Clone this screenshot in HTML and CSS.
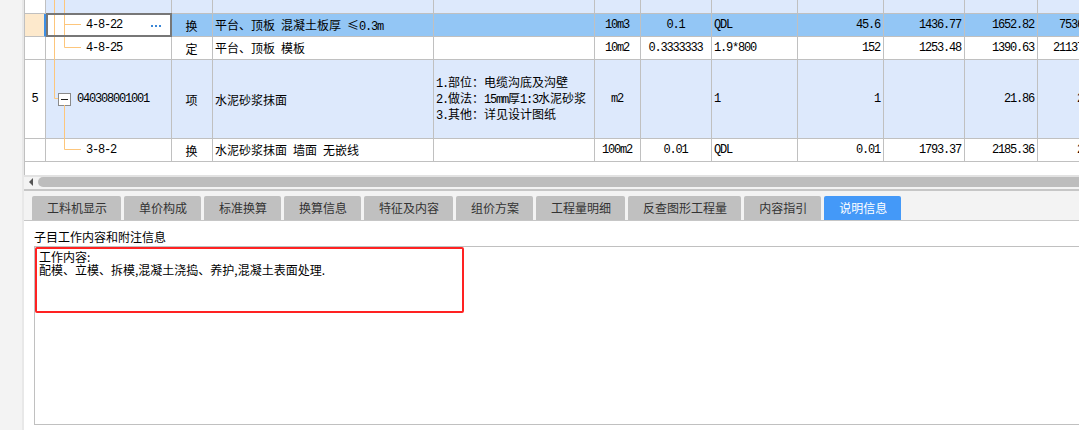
FILE: index.html
```html
<!DOCTYPE html>
<html lang="zh-CN">
<head>
    <meta charset="UTF-8">
    <title>分部分项</title>
    <link rel="stylesheet" href="styles.css">
</head>
<body>
<div class="app">
    <aside class="side"></aside>

    <div class="main">
        <!-- 清单 / 定额 表格 -->
        <div class="sheet">
            <div class="row top hl">
                <div class="c"></div><div class="c"></div><div class="c"></div><div class="c"></div>
                <div class="c"></div><div class="c"></div><div class="c"></div><div class="c"></div>
                <div class="c"></div><div class="c"></div><div class="c"></div><div class="c"></div>
            </div>

            <div class="row sel">
                <div class="c"></div>
                <div class="c code cur lv2"><span class="n">4-8-22</span><span class="more"></span></div>
                <div class="c ctr">换</div>
                <div class="c"><span>平台、顶板<span class="n"> </span>混凝土板厚<span class="n"> </span>≤<span class="n">0.3m</span></span></div>
                <div class="c"></div>
                <div class="c ctr n">10m3</div>
                <div class="c ctr n">0.1</div>
                <div class="c n">QDL</div>
                <div class="c rt n">45.6</div>
                <div class="c rt n">1436.77</div>
                <div class="c rt n">1652.82</div>
                <div class="c rt n">75368.59</div>
            </div>

            <div class="row">
                <div class="c"></div>
                <div class="c code lv2"><span class="n">4-8-25</span></div>
                <div class="c ctr">定</div>
                <div class="c"><span>平台、顶板<span class="n"> </span>模板</span></div>
                <div class="c"></div>
                <div class="c ctr n">10m2</div>
                <div class="c ctr n">0.3333333</div>
                <div class="c n">1.9*800</div>
                <div class="c rt n">152</div>
                <div class="c rt n">1253.48</div>
                <div class="c rt n">1390.63</div>
                <div class="c rt n">211375.76</div>
            </div>

            <div class="row tall hl">
                <div class="c ctr n">5</div>
                <div class="c code lv1"><span class="fold"></span><span class="n">040308001001</span></div>
                <div class="c ctr">项</div>
                <div class="c">水泥砂浆抹面</div>
                <div class="c">
                    <div class="feat">
                        <div><span class="n">1.</span>部位：电缆沟底及沟壁</div>
                        <div><span class="n">2.</span>做法：<span class="n">15mm</span>厚<span class="n">1:3</span>水泥砂浆</div>
                        <div><span class="n">3.</span>其他：详见设计图纸</div>
                    </div>
                </div>
                <div class="c ctr n">m2</div>
                <div class="c"></div>
                <div class="c n">1</div>
                <div class="c rt n">1</div>
                <div class="c"></div>
                <div class="c rt n">21.86</div>
                <div class="c rt n">21.86</div>
            </div>

            <div class="row">
                <div class="c"></div>
                <div class="c code lv2"><span class="n">3-8-2</span></div>
                <div class="c ctr">换</div>
                <div class="c"><span>水泥砂浆抹面<span class="n"> </span>墙面<span class="n"> </span>无嵌线</span></div>
                <div class="c"></div>
                <div class="c ctr n">100m2</div>
                <div class="c ctr n">0.01</div>
                <div class="c n">QDL</div>
                <div class="c rt n">0.01</div>
                <div class="c rt n">1793.37</div>
                <div class="c rt n">2185.36</div>
                <div class="c rt n">21.85</div>
            </div>

            <!-- tree lines -->
            <svg class="tree" width="60" height="160" viewBox="0 0 60 160">
                <g stroke="#fdc67c" stroke-width="1" fill="none">
                    <path d="M29.5 0V98.5H33"/>
                    <path d="M39.5 0V47.5H56M39.5 24.5H56"/>
                    <path d="M39.5 105V149.5H56"/>
                </g>
            </svg>
        </div>

        <div class="hscroll">
            <span class="arrow"></span>
            <span class="thumb"></span>
        </div>

        <div class="tabs">
            <div class="tab">工料机显示</div>
            <div class="tab">单价构成</div>
            <div class="tab">标准换算</div>
            <div class="tab">换算信息</div>
            <div class="tab">特征及内容</div>
            <div class="tab">组价方案</div>
            <div class="tab">工程量明细</div>
            <div class="tab">反查图形工程量</div>
            <div class="tab">内容指引</div>
            <div class="tab on">说明信息</div>
        </div>

        <div class="detail">
            <div class="detail-title">子目工作内容和附注信息</div>
            <div class="memo">
                <p>工作内容:</p>
                <p>配模、立模、拆模,混凝土浇捣、养护,混凝土表面处理.</p>
                <div class="mark"></div>
            </div>
        </div>
    </div>
</div>
</body>
</html>
```

FILE: styles.css
```css
* {
    box-sizing: border-box;
}
body {
    margin: 0;
    background-color: #fff;
    color: #000;
    font: 12px "Noto Sans CJK SC", sans-serif;
    overflow: hidden;
}
.app {
    display: flex;
    height: 430px;
}
.side {
    flex: none;
    width: 24px;
    background-color: #f3f3f3;
    border-right: 2px solid #e8e8e8;
}
.main {
    flex: 1;
    min-width: 0;
    display: flex;
    flex-direction: column;
    overflow: hidden;
}

/* grid */
.sheet {
    position: relative;
    flex: none;
    height: 175px;
    border-left: 1px solid #c0c0c0;
    overflow: hidden;
}
.row {
    display: grid;
    grid-template-columns: 21px 126px 41px 221px 161px 46px 71px 86px 86px 81px 73px 73px;
    height: 23px;
}
.row.top {
    height: 14px;
}
.row.tall {
    height: 79px;
}
.c {
    display: flex;
    align-items: center;
    padding: 0 3px 0 2px;
    border-right: 1px solid #c0c0c0;
    border-bottom: 1px solid #c0c0c0;
    white-space: nowrap;
    overflow: hidden;
}
.ctr {
    justify-content: center;
}
.rt {
    justify-content: flex-end;
}
.n {
    font: 12px "Liberation Mono", monospace;
    letter-spacing: -1.2px;
}
.row.hl .c {
    background-color: #dde9fc;
}
.row .c:first-child {
    background-color: #fff;
}
.row.sel .c {
    background-color: #93c6f5;
}
.row.sel .c:first-child {
    background-color: #fde9cc;
    border-right: 2px solid #3d8fe5;
}
.row.sel .code {
    background-color: #fff;
}
.code.lv1 {
    padding-left: 12px;
}
.code.lv2 {
    padding-left: 40px;
}
.cur {
    position: relative;
    overflow: visible;
}
.cur::after {
    content: "";
    position: absolute;
    top: -1px;
    left: 0;
    right: -1px;
    bottom: -1px;
    border: 2px solid #777;
    z-index: 2;
}
.more {
    width: 10px;
    height: 2px;
    margin: 1px 7px 0 auto;
    background: linear-gradient(90deg, #3a86d6 2px, transparent 2px) 0 0 / 4px 2px repeat-x;
}
.fold {
    position: relative;
    width: 13px;
    height: 13px;
    margin-right: 6px;
    border: 1px solid #8a8a8a;
    background-color: #fff;
}
.fold::before {
    content: "";
    position: absolute;
    left: 2px;
    right: 2px;
    top: 5px;
    height: 1px;
    background-color: #222;
}
.feat {
    line-height: 14px;
}
.tree {
    position: absolute;
    left: 0;
    top: 0;
    z-index: 1;
}

/* horizontal scrollbar */
.hscroll {
    flex: none;
    display: flex;
    align-items: flex-start;
    height: 16px;
    background-color: #f3f3f3;
    border-top: 2px solid #e2e2e2;
    border-bottom: 2px solid #c6c6c6;
}
.arrow {
    width: 0;
    height: 0;
    margin: 1px 0 0 5px;
    border-right: 4px solid #555;
    border-top: 4px solid transparent;
    border-bottom: 4px solid transparent;
}
.thumb {
    flex: 1;
    height: 10px;
    margin-left: 5px;
    background-color: #bdbdbd;
    border-radius: 5px 0 0 5px;
}

/* tabs */
.tabs {
    flex: none;
    display: flex;
    gap: 3px;
    height: 30px;
    padding: 5px 0 0 8px;
    background-color: #f3f3f3;
    border-bottom: 1px solid #c6c6c6;
}
.tab {
    height: 24px;
    padding: 0 14px 0 15px;
    line-height: 24px;
    background-color: #c0c0c0;
    color: #333;
    border-radius: 2px 2px 0 0;
}
.tab.on {
    background-color: #4499f8;
    color: #fff;
}

/* detail */
.detail {
    flex: 1;
    padding-left: 10px;
}
.detail-title {
    height: 25px;
    padding-top: 9px;
    line-height: 13px;
}
.memo {
    position: relative;
    height: 179px;
    padding: 3px 4px;
    border: 1px solid #c0c0c0;
    border-right: none;
    line-height: 13px;
}
.memo p {
    margin: 0;
}
.mark {
    position: absolute;
    left: 0;
    top: 0;
    width: 429px;
    height: 66px;
    border: 2px solid #ff2222;
    border-radius: 2px;
}
```
